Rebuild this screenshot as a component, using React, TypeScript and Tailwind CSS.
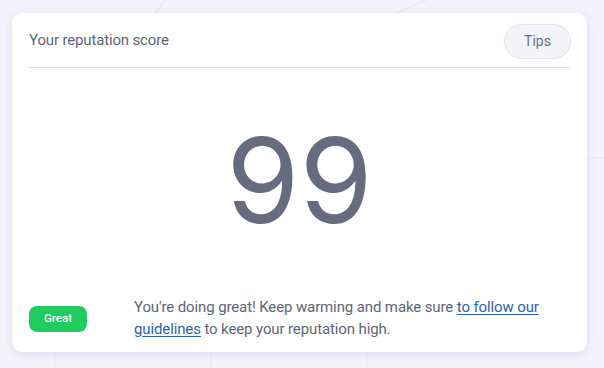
import React from "react";

export default function App() {
  return (
    <div
      className="relative w-[604px] h-[368px] overflow-hidden bg-[#f4f2fd]"
      style={{ fontFamily: "Roboto, 'Noto Sans', sans-serif" }}
    >
      <svg className="absolute inset-0" width="604" height="368" fill="none">
        <path d="M150 20 Q 160 5 175 -10" stroke="#e6e3f3" strokeWidth="1" />
        <path d="M385 20 Q 410 5 440 -5" stroke="#e6e3f3" strokeWidth="1" />
        <line x1="55" y1="340" x2="55" y2="368" stroke="#e9e6f5" />
        <line x1="211" y1="340" x2="211" y2="368" stroke="#e9e6f5" />
        <line x1="367" y1="340" x2="367" y2="368" stroke="#e9e6f5" />
        <line x1="585" y1="158" x2="604" y2="158" stroke="#e9e6f5" />
      </svg>
      <div className="relative pt-[13px] pl-[12px]">
        <div className="w-[575px] h-[339px] bg-white rounded-[10px] shadow-[0_2px_8px_rgba(60,50,120,0.12)] px-[17px] flex flex-col">
          <div className="flex items-center justify-between h-[55px] pt-[2px] border-b border-[#dde1e6]">
            <span className="text-[15px] text-[#5f6478] tracking-[-0.15px] -mt-[2px]">Your reputation score</span>
            <button className="h-[35px] w-[67px] -mr-[1px] rounded-full bg-[#f3f4f7] border border-[#e2e4ea] text-[14px] text-[#6b7082]">
              Tips
            </button>
          </div>
          <div className="flex-1 flex items-center justify-center">
            <span
              className="text-[118px] leading-none text-[#676b80] -mt-[4px]"
              style={{ fontFamily: "Inter, sans-serif" }}
            >
              99
            </span>
          </div>
          <div className="flex items-start pb-[12px]">
            <span className="mt-[10px] w-[58px] h-[26px] rounded-[8px] bg-[#21cc5f] text-white text-[11.5px] font-medium flex items-center justify-center">
              Great
            </span>
            <p className="ml-[47px] text-[15px] leading-[22px] text-[#5f6478] tracking-[-0.12px] w-[420px]">
              You're doing great! Keep warming and make sure{" "}
              <a href="#" className="text-[#2b62a6] underline underline-offset-2">
                to follow our guidelines
              </a>{" "}
              to keep your reputation high.
            </p>
          </div>
        </div>
      </div>
    </div>
  );
}
